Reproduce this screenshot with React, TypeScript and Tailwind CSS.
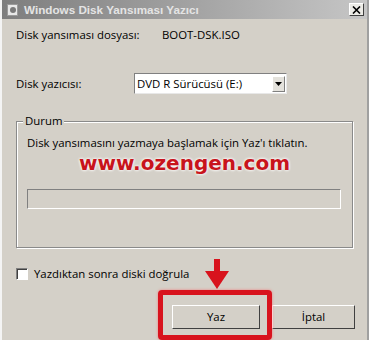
export default function App() {
  const ui = { fontFamily: '"Open Sans", "DejaVu Sans", sans-serif' };
  return (
    <div className="w-[369px] h-[340px] overflow-hidden bg-[#d4d0c8] border-l-2 border-r-2 border-l-[#f4f4f4] border-r-[#a0a0a0] text-[11.4px] text-black" style={ui}>
      {/* title bar */}
      <div className="h-[19px] flex items-center bg-gradient-to-r from-[#7e7e7e] to-[#c6c6c6] pl-[5px] pr-[3px]">
        <div className="w-[11px] h-[12px] bg-[#e8e8e8] border border-[#9a9a9a] flex items-center justify-center">
          <div className="w-[6px] h-[6px] rounded-full bg-[#7a7a7a]" />
        </div>
        <span className="ml-[6px] font-bold text-[11.7px] text-[#e4e4e4]" style={{ fontFamily: '"Liberation Sans", Arial, sans-serif' }}>
          Windows Disk Yansıması Yazıcı
        </span>
        <div className="ml-auto w-[15px] h-[13px] bg-[#ecebe6] border border-t-white border-l-white border-b-[#404040] border-r-[#404040] flex items-center justify-center">
          <svg width="9" height="8" viewBox="0 0 9 8">
            <path d="M1 0.5 L8 7.5 M8 0.5 L1 7.5" stroke="#000" strokeWidth="1.6" />
          </svg>
        </div>
      </div>

      <div className="px-[14px]">
        <div className="flex items-center h-[16px] mt-[8px]">
          <span className="w-[146px]">Disk yansıması dosyası:</span>
          <span>BOOT-DSK.ISO</span>
        </div>

        <div className="flex items-center mt-[30px]">
          <span className="w-[118px]">Disk yazıcısı:</span>
          <div className="w-[153px] h-[21px] bg-white border border-t-[#808080] border-l-[#808080] border-b-[#e8e8e8] border-r-[#e8e8e8] flex items-center pl-[2px] pr-[1px]">
            <span className="flex-1">DVD R Sürücüsü (E:)</span>
            <div className="w-[13px] h-[16px] bg-[#e4e2dc] border border-t-white border-l-white border-b-[#808080] border-r-[#808080] flex items-center justify-center">
              <svg width="7" height="4" viewBox="0 0 7 4"><path d="M0 0 H7 L3.5 4 Z" fill="#000" /></svg>
            </div>
          </div>
        </div>

        {/* group box */}
        <div className="relative mt-[27px] w-[337px] h-[127px] border border-[#8a8a8a] shadow-[inset_1px_1px_0_#fff,1px_1px_0_#fff] px-[10px]">
          <span className="absolute -top-[9px] left-[6px] bg-[#d4d0c8] px-[2px] leading-[16px]">Durum</span>
          <div className="mt-[13px] leading-[16px]">Disk yansımasını yazmaya başlamak için Yaz'ı tıklatın.</div>
          <div
            className="text-center text-[20px] font-bold leading-[24px] text-[#c8141c]"
            style={{ fontFamily: '"DejaVu Sans", sans-serif', textShadow: "0 0 3px #fff, 0 0 3px #fff" }}
          >
            www.ozengen.com
          </div>
          <div className="mt-[14px] h-[20px] w-[314px] border border-t-[#808080] border-l-[#808080] border-b-white border-r-white" />
        </div>

        <div className="flex items-center mt-[19px] h-[14px]">
          <div className="w-[12px] h-[12px] bg-white border border-t-[#808080] border-l-[#808080] border-b-white border-r-white shadow-[inset_1px_1px_0_#404040]" />
          <span className="ml-[6px]">Yazdıktan sonra diski doğrula</span>
        </div>
      </div>

      {/* buttons */}
      <div className="relative flex justify-end gap-[12px] pr-[12px] mt-[24px]">
        <div className="w-[88px] h-[24px] bg-[#d4d0c8] border border-t-white border-l-white border-b-[#404040] border-r-[#404040] flex items-center justify-center">Yaz</div>
        <div className="w-[83px] h-[24px] bg-[#d4d0c8] border border-t-white border-l-white border-b-[#404040] border-r-[#404040] flex items-center justify-center">İptal</div>
        {/* highlight overlay */}
        <div className="absolute left-[156px] -top-[15px] w-[114px] h-[50px] border-[5px] border-[#d8131d] rounded-[4px] shadow-[0_0_3px_#f08080]" />
        <svg className="absolute left-[203px] -top-[46px]" width="24" height="30" viewBox="0 0 24 30">
          <rect x="9" y="0" width="6" height="14" fill="#d8131d" />
          <path d="M0 12 H24 L12 30 Z" fill="#d8131d" />
        </svg>
      </div>
    </div>
  );
}
